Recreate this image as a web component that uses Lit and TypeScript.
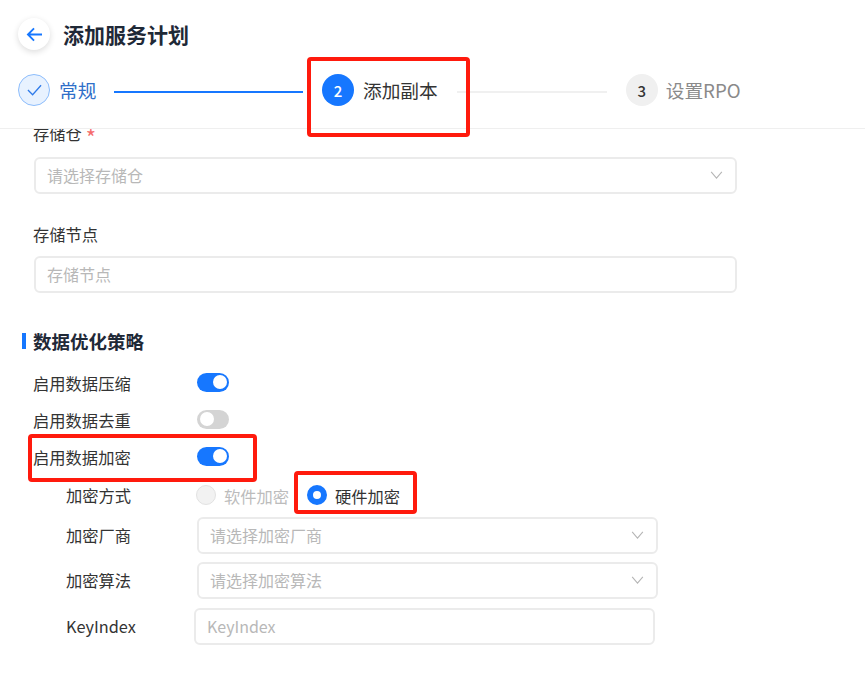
import { css, html, LitElement } from "lit";
import { customElement } from "lit/decorators.js";

const chevron = html`<svg class="chevron" viewBox="0 0 14 9" width="13" height="8">
  <path d="M1 1l6 7 6-7" fill="none" stroke="#b5b5b5" stroke-width="1.2" />
</svg>`;

@customElement("app-root")
export class AppRoot extends LitElement {
  static styles = css`
    :host {
      display: block;
      position: relative;
      width: 865px;
      height: 681px;
      overflow: hidden;
      background: #fff;
      color: #333;
      font-family: "Noto Sans CJK SC", "Noto Sans", sans-serif;
      font-size: 16px;
    }

    header {
      height: 128px;
      border-bottom: 1px solid #efefef;
      box-sizing: content-box;
      padding-left: 18px;
    }

    .title-row {
      display: flex;
      align-items: center;
      gap: 13px;
      height: 32px;
      padding-top: 18px;
    }

    .back {
      width: 32px;
      height: 32px;
      border-radius: 50%;
      background: #fff;
      box-shadow: 0 2px 6px rgba(0, 0, 0, 0.14);
      display: flex;
      align-items: center;
      justify-content: center;
    }

    h1 {
      margin: 0;
      font-size: 21px;
      font-weight: 700;
      color: #1f2937;
    }

    .steps {
      display: flex;
      align-items: center;
      height: 32px;
      margin-top: 24px;
    }

    .dot {
      width: 32px;
      height: 32px;
      box-sizing: border-box;
      border-radius: 50%;
      display: flex;
      align-items: center;
      justify-content: center;
      font-size: 15px;
      font-weight: 500;
      flex: none;
    }

    .dot.done {
      background: #e8f2ff;
      border: 1px solid #8dbdfc;
    }

    .dot.current {
      background: #1677ff;
      color: #fff;
    }

    .dot.todo {
      background: #f0f0f0;
      color: #333;
    }

    .step-label {
      font-size: 18.7px;
      margin-left: 9px;
      line-height: 30px;
      white-space: nowrap;
    }

    .step-label.done {
      color: #2f6fc9;
    }

    .step-label.todo {
      color: #8a8a8a;
      margin-left: 8px;
    }

    .line {
      height: 2px;
      margin: 3px 19px 0 18px;
      background: #f0f0f0;
    }

    .line.active {
      background: #1677ff;
      margin-left: 17.6px;
    }

    .line.rest {
      margin-left: 19px;
    }

    main {
      height: 552px;
      overflow: hidden;
      padding-left: 33px;
    }

    .form {
      margin-top: -9px;
    }

    .label {
      height: 26px;
      line-height: 26px;
      font-size: 16.3px;
    }

    .required {
      color: #f56c6c;
      margin-left: 4px;
      font-size: 22px;
      line-height: 0;
      vertical-align: -6px;
    }

    .field {
      display: flex;
      align-items: center;
      justify-content: space-between;
      box-sizing: border-box;
      width: 703px;
      height: 37px;
      margin-left: 1px;
      padding: 0 12px 1px 11px;
      border: 2px solid #ebebeb;
      border-radius: 6px;
      color: #b8b8b8;
      font-size: 16px;
    }

    .first {
      margin-top: 11px;
    }

    .group {
      margin-top: 27px;
    }

    .group .field {
      margin-top: 9px;
    }

    h2 {
      position: relative;
      margin: 35px 0 0;
      font-size: 18.5px;
      line-height: 26px;
      font-weight: 700;
      color: #1f2937;
    }

    h2::before {
      content: "";
      position: absolute;
      left: -11px;
      top: 5px;
      width: 4px;
      height: 16px;
      background: #1677ff;
    }

    .rows {
      margin-top: 10px;
      display: grid;
      grid-auto-rows: 37px;
      font-size: 16.3px;
    }

    .toggle-row {
      display: flex;
      align-items: center;
    }

    .toggle-row span {
      width: 164px;
    }

    .switch {
      width: 32px;
      height: 19px;
      box-sizing: border-box;
      border-radius: 10px;
      background: #1677ff;
      padding: 2.5px;
      display: flex;
      justify-content: flex-end;
      margin-top: -1px;
    }

    .switch i {
      width: 14px;
      height: 14px;
      border-radius: 50%;
      background: #fff;
    }

    .switch.off {
      background: #d4d4d4;
      justify-content: flex-start;
    }

    .sub {
      margin-top: 2px;
      padding-left: 33px;
      display: grid;
      grid-template-columns: 131px auto;
      align-items: center;
      justify-content: start;
      font-size: 16.3px;
    }

    .sub .field {
      width: 461px;
      margin-left: 0;
    }

    .sub .name {
      line-height: 37px;
    }

    .method {
      margin-bottom: 3px;
    }

    .radios {
      display: flex;
      align-items: center;
      height: 37px;
      margin-left: -1px;
    }

    .radio {
      width: 20px;
      height: 20px;
      margin-top: -2px;
      box-sizing: border-box;
      border-radius: 50%;
      border: 1px solid #e2e2e2;
      background: #f2f2f2;
      flex: none;
    }

    .radio.on {
      border: 6px solid #1677ff;
      background: #fff;
    }

    .radio-text {
      margin-left: 8px;
      color: #bcbcbc;
      width: 83px;
    }

    .radio-text.on {
      color: #333;
    }

    .sub .gap-s {
      margin-top: 8px;
    }

    .sub .gap {
      margin-top: 9px;
    }

    .sub .shift {
      margin-left: -3px;
    }

    .mark {
      position: absolute;
      box-sizing: border-box;
      border: 4px solid #ff1a0d;
      border-radius: 4px;
      pointer-events: none;
    }

    .mark.step {
      left: 307px;
      top: 57px;
      width: 163px;
      height: 80px;
    }

    .mark.encrypt {
      left: 28px;
      top: 434px;
      width: 229px;
      height: 48px;
    }

    .mark.hardware {
      left: 294px;
      top: 471px;
      width: 123px;
      height: 43px;
    }
  `;

  render() {
    return html`
      <header>
        <div class="title-row">
          <div class="back">
            <svg viewBox="0 0 18 16" width="17" height="15">
              <path d="M17 8H2M8.5 1.5L2 8l6.5 6.5" fill="none" stroke="#1677ff" stroke-width="2" />
            </svg>
          </div>
          <h1>添加服务计划</h1>
        </div>
        <div class="steps">
          <div class="dot done">
            <svg viewBox="0 0 16 12" width="15" height="12">
              <path d="M1 6l5 5 9-10" fill="none" stroke="#2f7bea" stroke-width="1.4" />
            </svg>
          </div>
          <div class="step-label done">常规</div>
          <div class="line active" style="width:189px"></div>
          <div class="dot current">2</div>
          <div class="step-label">添加副本</div>
          <div class="line rest" style="width:150px"></div>
          <div class="dot todo">3</div>
          <div class="step-label todo">设置RPO</div>
        </div>
      </header>
      <main>
        <div class="form">
          <div class="label">存储仓<span class="required">*</span></div>
          <div class="field first">请选择存储仓 ${chevron}</div>
          <div class="group">
            <div class="label">存储节点</div>
            <div class="field">存储节点</div>
          </div>
          <h2>数据优化策略</h2>
          <div class="rows">
            <div class="toggle-row"><span>启用数据压缩</span><div class="switch"><i></i></div></div>
            <div class="toggle-row"><span>启用数据去重</span><div class="switch off"><i></i></div></div>
            <div class="toggle-row"><span>启用数据加密</span><div class="switch"><i></i></div></div>
          </div>
          <div class="sub">
            <div class="name method">加密方式</div>
            <div class="radios method">
              <div class="radio"></div>
              <div class="radio-text">软件加密</div>
              <div class="radio on"></div>
              <div class="radio-text on">硬件加密</div>
            </div>
            <div class="name">加密厂商</div>
            <div class="field">请选择加密厂商 ${chevron}</div>
            <div class="name gap-s">加密算法</div>
            <div class="field gap-s">请选择加密算法 ${chevron}</div>
            <div class="name gap">KeyIndex</div>
            <div class="field gap shift">KeyIndex</div>
          </div>
        </div>
      </main>
      <div class="mark step"></div>
      <div class="mark encrypt"></div>
      <div class="mark hardware"></div>
    `;
  }
}
